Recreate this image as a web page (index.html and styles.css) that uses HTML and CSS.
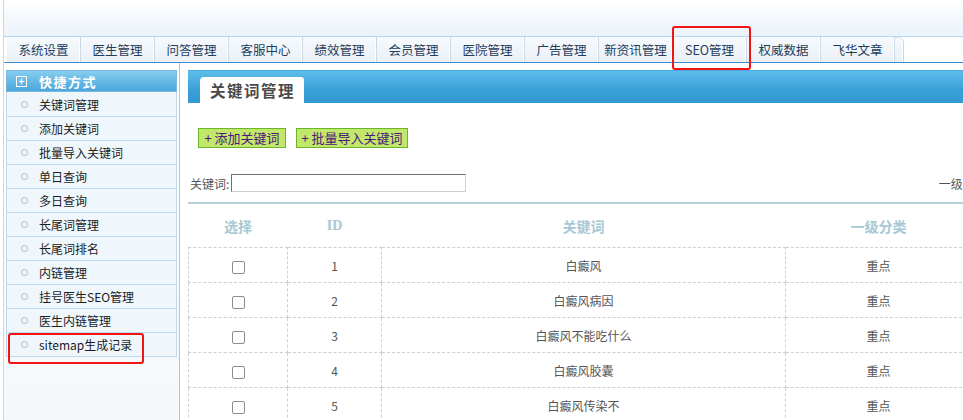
FILE: index.html
```html
<!DOCTYPE html>
<html>
<head>
<meta charset="utf-8">
<link rel="stylesheet" href="styles.css">
</head>
<body>
<div class="frame">
  <div class="top"></div>
  <div class="navbar">
    <div class="tabs">
      <span class="tab">系统设置</span>
      <span class="tab">医生管理</span>
      <span class="tab">问答管理</span>
      <span class="tab">客服中心</span>
      <span class="tab">绩效管理</span>
      <span class="tab">会员管理</span>
      <span class="tab">医院管理</span>
      <span class="tab">广告管理</span>
      <span class="tab">新资讯管理</span>
      <span class="tab">SEO管理</span>
      <span class="tab">权威数据</span>
      <span class="tab">飞华文章</span>
      <span class="tab tab-end"></span>
    </div>
  </div>
  <div class="body">
    <div class="sidebar">
      <div class="side-head"><span class="plus">+</span>快捷方式</div>
      <ul class="side-list">
        <li><i class="dot"></i>关键词管理</li>
        <li><i class="dot"></i>添加关键词</li>
        <li><i class="dot"></i>批量导入关键词</li>
        <li><i class="dot"></i>单日查询</li>
        <li><i class="dot"></i>多日查询</li>
        <li><i class="dot"></i>长尾词管理</li>
        <li><i class="dot"></i>长尾词排名</li>
        <li><i class="dot"></i>内链管理</li>
        <li><i class="dot"></i>挂号医生SEO管理</li>
        <li><i class="dot"></i>医生内链管理</li>
        <li><i class="dot"></i>sitemap生成记录</li>
      </ul>
    </div>
    <div class="main">
      <div class="band"><div class="band-tab">关键词管理</div></div>
      <div class="actions">
        <span class="btn btn1">+ 添加关键词</span>
        <span class="btn btn2">+ 批量导入关键词</span>
      </div>
      <div class="search">
        <label class="lbl">关键词:</label><span class="input"></span>
        <span class="spacer"></span>
        <span class="lbl">一级分类:</span>
      </div>
      <div class="rule"></div>
      <table class="grid">
        <thead>
          <tr><th class="c1">选择</th><th class="c2 serif">ID</th><th class="c3">关键词</th><th class="c4">一级分类</th></tr>
        </thead>
        <tbody>
          <tr><td><span class="cb"></span></td><td>1</td><td>白癜风</td><td>重点</td></tr>
          <tr><td><span class="cb"></span></td><td>2</td><td>白癜风病因</td><td>重点</td></tr>
          <tr><td><span class="cb"></span></td><td>3</td><td>白癜风不能吃什么</td><td>重点</td></tr>
          <tr><td><span class="cb"></span></td><td>4</td><td>白癜风胶囊</td><td>重点</td></tr>
          <tr><td><span class="cb"></span></td><td>5</td><td>白癜风传染不</td><td>重点</td></tr>
        </tbody>
      </table>
    </div>
  </div>
</div>
<div class="mark mark-seo"></div>
<div class="mark mark-sitemap"></div>
</body>
</html>
```
FILE: styles.css
```css
html, body {
  margin: 0;
  padding: 0;
  background: #fff;
  overflow: hidden;
  width: 963px;
  height: 420px;
}
body {
  font-family: "Noto Sans CJK SC", "Liberation Sans", sans-serif;
  font-size: 12px;
  color: #333;
  position: relative;
}
.frame {
  margin-left: 3px;
  border-left: 1px solid #c9d9e6;
  height: 420px;
  width: 1200px;
}
.top {
  height: 36px;
  background: linear-gradient(#ffffff, #f6f9fc 40%, #eaf3fb);
  border-bottom: 1px solid #b9d6ea;
}
.navbar {
  height: 25px;
  border-bottom: 1px solid #3c8ccb;
  padding-left: 3px;
}
.tabs {
  display: flex;
  height: 25px;
}
.tab {
  width: 73px;
  height: 25px;
  line-height: 25px;
  text-align: center;
  font-size: 12.5px;
  color: #1f3d5c;
  background: linear-gradient(#f7fafd, #e9f0f7);
  border-right: 1px solid #ccd9e5;
  box-shadow: inset -1px 0 0 #ffffff;
  white-space: nowrap;
}
.tab-end {
  width: 9px;
  border-right: 1px solid #c8d6e3;
  border-top: 1px solid #d6e2ec;
  border-top-right-radius: 6px;
  box-sizing: border-box;
}
.body {
  display: flex;
  height: 357px;
}
.sidebar {
  padding: 7px 0 0 2px;
  box-sizing: border-box;
  border-right: 1px solid #a9c9e2;
  background: linear-gradient(#ffffff, #f4f8fb);
  width: 176px;
}
.side-head {
  height: 22px;
  width: 171px;
  box-sizing: border-box;
  line-height: 21px;
  color: #fff;
  font-weight: bold;
  font-size: 13px;
  letter-spacing: 1.5px;
  background: linear-gradient(#86cdef, #4aa6dc);
  border: 1px solid #7ab8de;
  padding-left: 9px;
  display: flex;
  align-items: center;
}
.plus {
  display: inline-block;
  width: 9px;
  height: 9px;
  border: 1px solid #fff;
  font-size: 10px;
  line-height: 8px;
  text-align: center;
  margin-right: 12px;
  font-weight: bold;
  letter-spacing: 0;
}
.side-list {
  list-style: none;
  margin: 0;
  padding: 0;
  width: 171px;
}
.side-list li {
  height: 23px;
  line-height: 23px;
  background: #eff7fc;
  border: 1px solid #c3d8ea;
  border-top: none;
  color: #1c1c1c;
  font-size: 12px;
  display: flex;
  align-items: center;
  white-space: nowrap;
}
.side-list li:first-child { height: 24px; }
.dot {
  display: inline-block;
  width: 5px;
  height: 5px;
  border: 1px solid #b8b8b8;
  border-radius: 50%;
  margin: 0 11px 0 14px;
}
.main {
  padding: 7px 0 0 8px;
  flex: 1;
}
.band {
  height: 33px;
  background: linear-gradient(#5dbdea, #3a9fd8 60%, #3299d3);
  border-top: 1px solid #4ea7dc;
  box-sizing: border-box;
  padding: 6px 0 0 12px;
}
.band-tab {
  width: 104px;
  height: 27px;
  background: #fff;
  border-top-left-radius: 4px;
  border-top-right-radius: 3px;
  font-size: 15.5px;
  font-weight: bold;
  color: #4a4a4a;
  letter-spacing: 1.5px;
  line-height: 26px;
  padding-left: 10px;
  box-sizing: border-box;
  white-space: nowrap;
}
.actions {
  display: flex;
  gap: 10px;
  padding: 25px 0 0 10px;
}
.btn {
  height: 20px;
  line-height: 18px;
  box-sizing: border-box;
  background: #c2e86b;
  border: 1px solid #6bb62a;
  color: #4d167a;
  font-size: 13px;
  white-space: nowrap;
  text-align: center;
  padding: 0;
}
.btn1 { width: 88px; }
.btn2 { width: 112px; }
.search {
  display: flex;
  align-items: center;
  padding: 26px 0 0 2px;
  height: 18px;
  width: 800px;
}
.lbl {
  font-size: 12px;
  color: #555;
  white-space: nowrap;
}
.input {
  width: 235px;
  height: 18px;
  box-sizing: border-box;
  border: 1px solid #d0d0d0;
  border-top-color: #707070;
  border-left-color: #707070;
  background: #fff;
  margin-left: 2px;
}
.spacer { flex: 1; }
.rule {
  margin-top: 10px;
  height: 2px;
  background: #b3d1d9;
  width: 800px;
}
.grid {
  border-collapse: collapse;
  width: 783px;
  table-layout: fixed;
}
.grid th {
  height: 43px;
  font-size: 14px;
  font-weight: bold;
  color: #a6c8d5;
  text-align: center;
  padding: 0;
}
.grid th.serif {
  font-family: "Liberation Serif", serif;
  font-size: 14px;
}
.c1 { width: 99px; }
.c2 { width: 94px; }
.c3 { width: 404px; }
.c4 { width: 186px; }
.grid td {
  height: 34px;
  border: 1px dashed #cfcfcf;
  text-align: center;
  color: #555;
  font-size: 12px;
  padding: 0;
}
.cb {
  display: inline-block;
  width: 11px;
  height: 11px;
  border: 1px solid #8d8d8d;
  border-radius: 2px;
  vertical-align: middle;
  background: #fff;
}
.mark {
  position: absolute;
  border: 2.5px solid #f01414;
  border-radius: 3px;
  box-sizing: border-box;
}
.mark-seo {
  left: 672px;
  top: 26px;
  width: 79px;
  height: 44px;
}
.mark-sitemap {
  left: 8px;
  top: 333px;
  width: 136px;
  height: 31px;
}
```
